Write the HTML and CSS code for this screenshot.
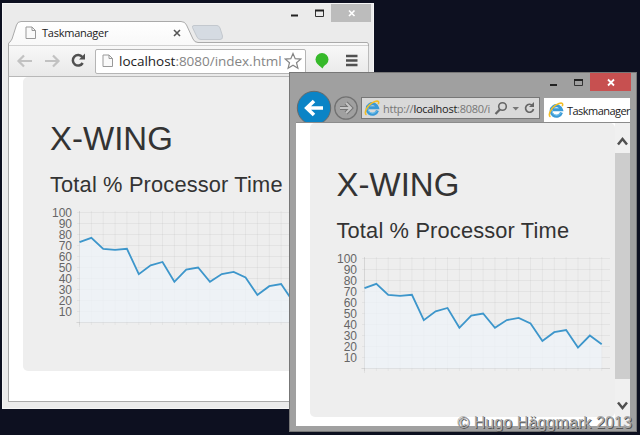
FILE: index.html
```
<!DOCTYPE html>
<html lang="en">
<head>
<meta charset="utf-8">
<title>Taskmanager</title>
<link rel="stylesheet" href="styles.css">
</head>
<body>
<svg class="defs" aria-hidden="true">
  <defs>
    <linearGradient id="tabfill" x1="0" y1="0" x2="0" y2="1"><stop offset="0" stop-color="#fff"/><stop offset="1" stop-color="#f8f8f8"/></linearGradient>
    <symbol id="page" viewBox="0 0 12 14"><path d="M1 1H7L10.5 4.5V12.5H1Z" fill="#fafafa" stroke="#999"/><path d="M7 1V4.5H10.5" fill="none" stroke="#999"/></symbol>
    <symbol id="ie" viewBox="0 0 16 16">
      <path d="M13.5 10.5A5.3 5.3 0 1 1 13.6 7.8H5" fill="none" stroke="#3b9ad6" stroke-width="3"/>
      <path d="M12.8 10.7A4.7 4.7 0 0 1 4 9.5" fill="none" stroke="#7cc9ef" stroke-width="1"/>
      <path d="M2.5 14.8C-1 13 4 4 11 1.5C14.5 .3 15.3 2 14.2 4.2" fill="none" stroke="#f3bd26" stroke-width="1.6"/>
    </symbol>
    <symbol id="chart" viewBox="0 0 280 124">
      <path class="grid" id="gridlines"/>
      <path class="axis" d="M29.5 3V119M26 114.500H275"/>
      <path class="area" id="area"/>
      <path class="series" id="series"/>
      <g class="labels">
        <text x="22" y="8.7">100</text><text x="22" y="19.7">90</text><text x="22" y="30.7">80</text><text x="22" y="41.7">70</text><text x="22" y="52.7">60</text>
        <text x="22" y="63.7">50</text><text x="22" y="74.7">40</text><text x="22" y="85.7">30</text><text x="22" y="96.7">20</text><text x="22" y="107.7">10</text>
      </g>
    </symbol>
  </defs>
</svg>

<section class="window chrome">
  <header class="tabstrip">
    <svg class="tabshape" width="366" height="25" viewBox="0 0 366 25">
      <path d="M186 4.500H209Q211 4.500 212 7L214.500 15Q215 18.500 212 18.500H193Q190 18.500 189 16L184.500 6.500Q184 4.500 186 4.500Z" fill="#d5dbe2" stroke="#c3c8ce"/>
      <path d="M.5 25V23Q.5 21.500 2 21L4 18L8.500 4Q9.500 .5 13 .5H173Q177 .5 178.500 4L185 18Q186.500 21.500 190 21.500H359Q360.500 21.500 360.500 24V25Z" fill="url(#tabfill)" stroke="#aaa"/>
    </svg>
    <div class="tab"><svg width="12" height="14"><use href="#page"/></svg><span class="tabname">Taskmanager</span><svg class="x" width="8" height="8"><path d="M1 1L7 7M7 1L1 7" stroke="#555" stroke-width="1.6"/></svg></div>
    <div class="controls">
      <svg width="82" height="19"><path d="M2 11.500H9" stroke="#222" stroke-width="2"/><path d="M26.500 6V12.500H34.500V6" fill="none" stroke="#333"/><path d="M26 6.500H35" stroke="#222" stroke-width="2"/><rect x="42" y="0" width="41" height="18" fill="#bcbcbc"/><path d="M60 6.500L65.500 12M65.500 6.500L60 12" stroke="#fff" stroke-width="1.700"/></svg>
    </div>
  </header>
  <nav class="toolbar">
    <svg class="navicons" width="78" height="20"><path d="M23 10H10M15 4.500L9.500 10L15 15.500M36 10H49M44 4.500L49.500 10L44 15.500" fill="none" stroke="#c2c2c2" stroke-width="2.200"/><path d="M73.300 6A5.300 5.300 0 1 0 73.700 12" fill="none" stroke="#505050" stroke-width="2.500"/><path d="M76 2.500V8.500H70Z" fill="#505050"/></svg>
    <div class="address"><svg width="12" height="14"><use href="#page"/></svg><span class="url"><b>localhost</b>:8080/index.html</span><svg class="star" width="18" height="18" viewBox="0 0 18 18"><path d="M9 1.500L11.200 6.700L16.700 7.100L12.500 10.700L13.900 16.200L9 13.200L4.100 16.200L5.500 10.700L1.300 7.100L6.800 6.700Z" fill="#fff" stroke="#858585" stroke-width="1.200"/></svg></div>
    <svg width="54" height="20"><circle cx="16" cy="8.500" r="6.500" fill="#36b92a"/><path d="M12 13.500L16.500 17.500L19.500 12.500Z" fill="#36b92a"/><path d="M40 5H51.500M40 9.500H51.500M40 14H51.500" stroke="#505050" stroke-width="2.400"/></svg>
  </nav>
  <main class="viewport">
    <div class="jumbotron"><h1>X-WING</h1><h2>Total % Processor Time</h2><svg class="plot" width="280" height="124"><use href="#chart"/></svg></div>
  </main>
</section>

<section class="window explorer">
  <header class="iebar">
    <svg class="ienav" width="66" height="50"><circle cx="18" cy="36" r="16.700" fill="#0b84c6" stroke="#696969"/><path d="M27 36H11M18 29L10.700 36L18 43" fill="none" stroke="#fff" stroke-width="3.600"/><circle cx="50" cy="36" r="11.200" fill="#a0a0a0" stroke="#727272" stroke-width="1.300"/><path d="M44 36H55M50 31L55 36L50 41" fill="none" stroke="#747474" stroke-width="4"/><path d="M44 36H55M50 31L55 36L50 41" fill="none" stroke="#c5c5c5" stroke-width="2"/></svg>
    <div class="ieaddress"><svg width="16" height="16"><use href="#ie"/></svg><span class="ieurl">http://<b>localhost</b>:8080/i</span><svg class="tools" width="44" height="18"><circle cx="8.500" cy="7.500" r="3.800" fill="none" stroke="#666" stroke-width="1.600"/><path d="M5.800 10.500L1.500 15" stroke="#666" stroke-width="2.300"/><path d="M18.500 8H25L21.750 11.500Z" fill="#777"/><path d="M38.500 6.500A4 4 0 1 0 39.500 10" fill="none" stroke="#666" stroke-width="1.700"/><path d="M40 3V8H35Z" fill="#666"/></svg></div>
    <div class="ietab"><svg width="16" height="16"><use href="#ie"/></svg><span>Taskmanager</span></div>
    <svg class="iecontrols" width="84" height="20"><path d="M3 12H10" stroke="#222" stroke-width="2"/><path d="M27.500 7V12.500H35.500V7" fill="none" stroke="#333"/><path d="M27 7H36" stroke="#222" stroke-width="2"/><rect x="43" y="0" width="41" height="18" fill="#c75050"/><path d="M61 6.500L67 12.500M67 6.500L61 12.500" stroke="#fff" stroke-width="1.800"/></svg>
  </header>
  <main class="ieviewport">
    <div class="jumbotron"><h1>X-WING</h1><h2>Total % Processor Time</h2><svg class="plot" width="280" height="124"><use href="#chart"/></svg></div>
    <div class="scrollbar"><svg width="15" height="30"><path d="M3 21.500L7.500 16L12 21.500" fill="none" stroke="#505050" stroke-width="2.500"/></svg><div class="thumb"></div><svg width="15" height="46"><path d="M3 23.500L7.500 29L12 23.500" fill="none" stroke="#505050" stroke-width="2.500"/></svg></div>
  </main>
</section>
<div class="watermark">© Hugo Häggmark 2013</div>
<script src="chart.js"></script>
</body>
</html>
```
FILE: styles.css
```
* { box-sizing: border-box; }
body { margin: 0; width: 640px; height: 435px; overflow: hidden; position: relative; background: #0d1020; font-family: "Liberation Sans", Arial, sans-serif; }
svg { display: block; flex: none; }
b { font-weight: inherit; color: #222; }
.defs { position: absolute; width: 0; height: 0; }
.window { position: absolute; overflow: hidden; }
.chrome { left: 2px; top: 3px; width: 372px; height: 406px; background: #ebebeb; border: 1px solid #f5f5f5; padding: 0 4px 6px 5px; }
.tabstrip { position: relative; height: 42px; padding-top: 17px; display: flex; align-items: flex-start; }
.tabshape { position: absolute; left: 0; top: 17px; }
.tab { position: relative; display: flex; align-items: center; width: 190px; height: 23px; padding-left: 17px; font: 11px "Open Sans", sans-serif; color: #222; }
.tabname { margin-left: 4px; padding-left: 1px; width: 132px; letter-spacing: -.25px; }
.controls { position: absolute; right: -2px; top: 0; }
.toolbar { height: 31px; display: flex; align-items: center; border-left: 1px solid #aaa; border-right: 1px solid #bbb; border-bottom: 1px solid #b8b8b8; background: linear-gradient(#f8f8f8, #e9e9e9); }
.address { width: 211px; height: 25px; margin-left: 8px; display: flex; align-items: center; background: #fff; border: 1px solid #b5b5b5; border-radius: 2px; padding-left: 6px; }
.url { margin-left: 5px; width: 165px; font: 13.5px "Open Sans", sans-serif; color: #858585; white-space: nowrap; letter-spacing: -.02px; }
.viewport { height: 325px; border: 1px solid #aaa; border-top: 0; background: #fff; padding-left: 14px; }
.jumbotron { height: 294px; padding-left: 27px; padding-top: 41px; background: #eee; border-radius: 5px; overflow: hidden; color: #333; }
h1 { margin: 0; font-size: 33px; line-height: 42px; font-weight: normal; white-space: nowrap; }
h2 { margin: 12px 0 0; font-size: 21.8px; line-height: 26px; font-weight: normal; white-space: nowrap; letter-spacing: .17px; }
.plot { margin-top: 10px; }
.chrome .plot { margin-left: -.5px; }
.explorer { left: 289px; top: 72px; width: 348px; height: 360px; background: #a0a0a0; border: 1px solid #777; padding: 0 6px; }
.iebar { position: relative; height: 50px; display: flex; align-items: flex-end; border-bottom: 1px solid #8b8b8b; }
.ienav { margin-right: -1px; }
.ieaddress { width: 181px; height: 22px; margin-bottom: 3px; padding-left: 2px; display: flex; align-items: center; background: #d9d9d9; border: 1px solid #777; }
.ieurl { margin-left: 3px; width: 111px; font: 11px "Open Sans", sans-serif; letter-spacing: -.27px; color: #777; white-space: nowrap; }
.ietab { width: 86px; height: 24px; margin-left: 4px; padding-left: 4px; display: flex; align-items: center; background: #fff; font: 11px "Open Sans", sans-serif; letter-spacing: -.55px; color: #222; }
.ietab span { margin-left: 3px; }
.iecontrols { position: absolute; right: -1px; top: 0; }
.ieviewport { display: flex; height: 303px; background: #fff; padding-left: 13.5px; }
.explorer .jumbotron { width: 305.5px; flex: none; }
.explorer .plot { margin-left: -1.5px; }
.scrollbar { width: 15px; background: #f0f0f0; }
.thumb { height: 226px; background: #cdcdcd; }
.grid { fill: none; stroke: #000; stroke-opacity: .045; }
.axis { fill: none; stroke: #000; stroke-opacity: .06; }
.area { fill: #edf3f8; fill-opacity: .75; }
.series { fill: none; stroke: #3d96cb; stroke-width: 1.8; }
.labels { font-size: 12px; fill: #666; text-anchor: end; }
.watermark { position: absolute; right: 8px; top: 413px; font-size: 16px; line-height: 20px; letter-spacing: .1px; color: #aaa; white-space: nowrap; text-shadow: 1px 1px 0 #555; }
```
FILE: chart.js
```
const values = [73, 77, 67, 66, 67, 44, 52, 55, 37, 48, 50, 37, 44, 46, 41, 25, 33, 35, 19, 30, 22];
const px = i => 29.5 + i * 11.86;
const py = v => 114.5 - v * 1.1;
const points = values.map((v, i) => `${px(i).toFixed(2)} ${py(v).toFixed(2)}`);
let grid = "";
for (let i = 0; i <= 20; i++) grid += `M${px(i)} 3V117`;
for (let v = 0; v <= 100; v += 10) grid += `M27 ${py(v)}H275`;
document.getElementById("gridlines").setAttribute("d", grid);
document.getElementById("series").setAttribute("d", "M" + points.join("L"));
document.getElementById("area").setAttribute("d", `M29.5 114.5L${points.join("L")}V114.5Z`);
```
